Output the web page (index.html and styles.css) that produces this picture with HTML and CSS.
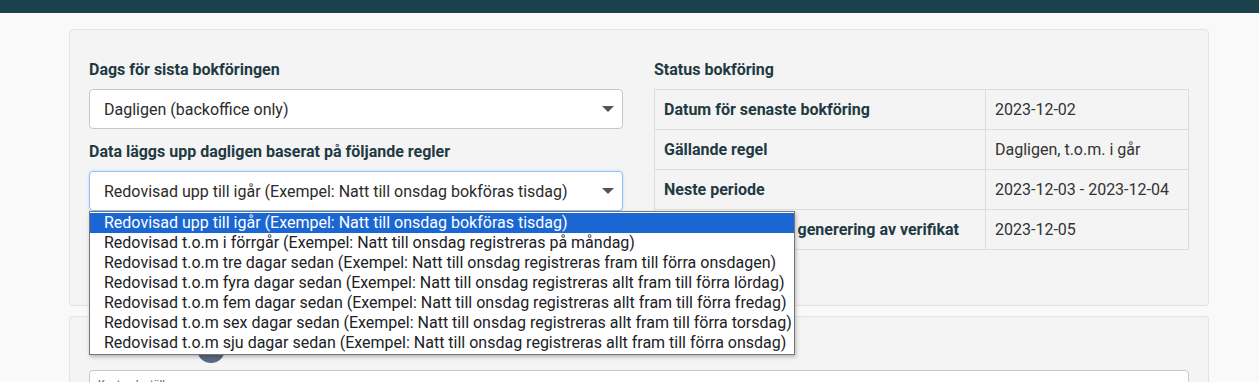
FILE: index.html
```html
<!DOCTYPE html>
<html lang="sv">
  <head>
    <meta charset="UTF-8" />
    <title>Bokföring</title>
    <link rel="stylesheet" href="styles.css">
  </head>
  <body>
    <div class="topbar"></div>
    <div class="page">
      <div class="panel">
        <div class="cols">
          <div class="left">
            <label class="lbl">Dags för sista bokföringen</label>
            <div class="select">
              <span>Dagligen (backoffice only)</span>
              <i class="caret"></i>
            </div>
            <label class="lbl second">Data läggs upp dagligen baserat på följande regler</label>
            <div class="select focused">
              <span>Redovisad upp till igår (Exempel: Natt till onsdag bokföras tisdag)</span>
              <i class="caret"></i>
            </div>
            <ul class="options">
              <li class="active">Redovisad upp till igår (Exempel: Natt till onsdag bokföras tisdag)</li>
              <li>Redovisad t.o.m i förrgår (Exempel: Natt till onsdag registreras på måndag)</li>
              <li>Redovisad t.o.m tre dagar sedan (Exempel: Natt till onsdag registreras fram till förra onsdagen)</li>
              <li>Redovisad t.o.m fyra dagar sedan (Exempel: Natt till onsdag registreras allt fram till förra lördag)</li>
              <li>Redovisad t.o.m fem dagar sedan (Exempel: Natt till onsdag registreras allt fram till förra fredag)</li>
              <li>Redovisad t.o.m sex dagar sedan (Exempel: Natt till onsdag registreras allt fram till förra torsdag)</li>
              <li>Redovisad t.o.m sju dagar sedan (Exempel: Natt till onsdag registreras allt fram till förra onsdag)</li>
            </ul>
          </div>
          <div class="right">
            <label class="lbl">Status bokföring</label>
            <table class="status">
              <tr><th>Datum för senaste bokföring</th><td>2023-12-02</td></tr>
              <tr><th>Gällande regel</th><td>Dagligen, t.o.m. i går</td></tr>
              <tr><th>Neste periode</th><td>2023-12-03 - 2023-12-04</td></tr>
              <tr><th>Datumet för nästa generering av verifikat</th><td>2023-12-05</td></tr>
            </table>
          </div>
        </div>
      </div>
      <div class="panel lower">
        <div class="step"><span class="dot"></span></div>
        <div class="field">
          <span class="field-lbl">Kostnadsställe</span>
        </div>
      </div>
    </div>
  </body>
</html>
```

FILE: styles.css
```css
*{
    margin: 0;
    padding: 0;
    box-sizing: border-box;
}
body{
    background: #f9f9f9;
    font-family: Roboto, "Liberation Sans", sans-serif;
    font-size: 16px;
    color: #333;
    overflow: hidden;
}
.topbar{
    height: 13px;
    background: #1b424a;
}
.page{
    width: 1140px;
    margin-left: 69px;
    padding-top: 16px;
}
.panel{
    background: #f4f4f4;
    border: 1px solid #e3e3e3;
    border-radius: 4px;
    padding: 30px 19px 55px;
}
.cols{
    display: grid;
    grid-template-columns: 534px 535px;
    gap: 31px;
}
.left{
    position: relative;
}
.lbl{
    display: block;
    font-weight: bold;
    color: #1f3a42;
    line-height: 20px;
    margin-bottom: 9px;
}
.lbl.second{
    margin-top: 13px;
}
.select{
    display: flex;
    align-items: center;
    justify-content: space-between;
    height: 40px;
    padding: 0 8px 0 14px;
    background: #fff;
    border: 1px solid #c8c8c8;
    border-radius: 4px;
    color: #2b2b2b;
}
.select.focused{
    border-color: #8fc3f7;
    box-shadow: 0 0 3px rgba(100, 160, 230, 0.35);
}
.caret{
    width: 0;
    height: 0;
    border-left: 6px solid transparent;
    border-right: 6px solid transparent;
    border-top: 6px solid #555;
}
.options{
    position: absolute;
    left: 0;
    top: 151px;
    width: 706px;
    list-style: none;
    background: #fff;
    border: 1px solid #767676;
    padding: 1px 0;
    box-shadow: 1px 2px 4px rgba(0, 0, 0, 0.25);
    z-index: 5;
}
.options li{
    height: 20px;
    line-height: 20px;
    padding-left: 14px;
    color: #202124;
    white-space: nowrap;
}
.options li.active{
    background: #1a66d2;
    color: #fff;
}
.status{
    width: 100%;
    border-collapse: collapse;
    border: 1px solid #ddd;
}
.status th, .status td{
    height: 40px;
    border: 1px solid #ddd;
    padding: 0 9px;
    text-align: left;
    white-space: nowrap;
}
.status th{
    width: 331px;
    font-weight: bold;
    color: #1f3a42;
}
.status td{
    color: #333;
}
.panel.lower{
    margin-top: 10px;
    padding: 18px 19px 0;
    height: 80px;
    border-bottom: none;
}
.step{
    padding-left: 108px;
    height: 35px;
}
.dot{
    display: block;
    width: 28px;
    height: 28px;
    border-radius: 50%;
    background: #5a6a80;
}
.field{
    height: 40px;
    background: #fff;
    border: 1px solid #c8c8c8;
    border-radius: 4px;
    padding: 2px 8px;
}
.field-lbl{
    font-size: 11px;
    color: #555;
}
```
